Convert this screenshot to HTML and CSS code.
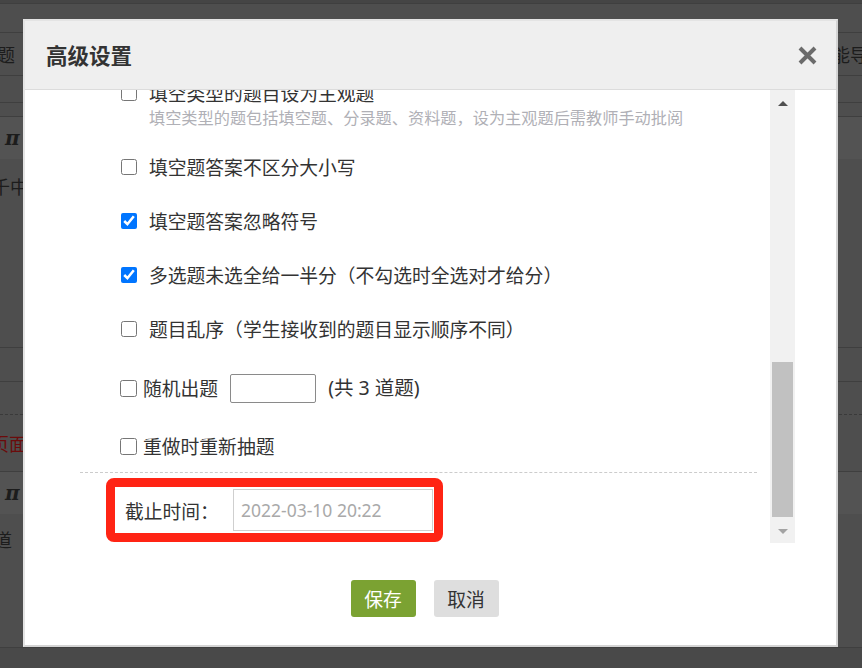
FILE: index.html
```html
<!DOCTYPE html>
<html lang="zh-CN">
<head>
<meta charset="utf-8">
<title>高级设置</title>
<link rel="stylesheet" href="styles.css">
</head>
<body>
<div class="page">
  <div class="bg-row r0"></div>
  <div class="bg-row r1"></div>
  <div class="bg-row r2"><span class="bl t-ti">题</span><span class="br">能导</span></div>
  <div class="bg-row r3"></div>
  <div class="bg-row r4"></div>
  <div class="bg-row r5"><span class="pi">π</span></div>
  <div class="bg-row r6"><span class="bl t-zh">千中</span></div>
  <div class="bg-row r7"></div>
  <div class="bg-row r8"></div>
  <div class="bg-row r9"><span class="bl t-red">页面</span></div>
  <div class="bg-row r10"><span class="pi">π</span></div>
  <div class="bg-row r11"><span class="bl t-dao">道</span></div>
  <div class="bg-row r12"></div>
</div>

<div class="modal">
  <div class="modal-head">
    <h2 class="modal-title">高级设置</h2>
    <button class="modal-close" type="button" aria-label="关闭">
      <svg width="19" height="19" viewBox="0 0 19 19"><path d="M2 2 L17 17 M17 2 L2 17" stroke="#6b6b6b" stroke-width="4" fill="none"/></svg>
    </button>
  </div>
  <div class="modal-body">
    <div class="scroll-view">
      <div class="scroll-content">
        <div class="opt-first">
          <label class="opt-label"><input type="checkbox" class="cb"><span>填空类型的题目设为主观题</span></label>
          <div class="opt-hint">填空类型的题包括填空题、分录题、资料题，设为主观题后需教师手动批阅</div>
        </div>
        <label class="opt"><input type="checkbox" class="cb"><span>填空题答案不区分大小写</span></label>
        <label class="opt"><input type="checkbox" class="cb" checked><span>填空题答案忽略符号</span></label>
        <label class="opt"><input type="checkbox" class="cb" checked><span>多选题未选全给一半分（不勾选时全选对才给分）</span></label>
        <label class="opt"><input type="checkbox" class="cb"><span>题目乱序（学生接收到的题目显示顺序不同）</span></label>
        <div class="opt opt-tight opt-random">
          <input type="checkbox" class="cb"><span>随机出题</span>
          <input type="text" class="num-input">
          <span class="count">(共 3 道题)</span>
        </div>
        <label class="opt opt-tight opt-redo"><input type="checkbox" class="cb"><span>重做时重新抽题</span></label>
        <div class="deadline-sec">
          <div class="deadline-box">
            <span class="deadline-label">截止时间：</span>
            <input type="text" class="deadline-input" placeholder="2022-03-10 20:22">
          </div>
        </div>
      </div>
    </div>
    <div class="scrollbar">
      <div class="sb-btn"><span class="arrow-up"></span></div>
      <div class="sb-track"><div class="sb-thumb"></div></div>
      <div class="sb-btn"><span class="arrow-down"></span></div>
    </div>
  </div>
  <div class="modal-foot">
    <button class="btn btn-save" type="button">保存</button>
    <button class="btn btn-cancel" type="button">取消</button>
  </div>
</div>
</body>
</html>
```

FILE: styles.css
```css
* { box-sizing: border-box; }
html, body { margin: 0; padding: 0; }
body {
  width: 862px;
  height: 668px;
  overflow: hidden;
  background: #494949;
  font-family: "Noto Sans", "Noto Sans CJK SC", sans-serif;
  position: relative;
}

/* dimmed page behind the dialog */
.page { width: 862px; }
.bg-row {
  position: relative;
  display: flex;
  justify-content: space-between;
  align-items: center;
  background: #4e4e4e;
  border-bottom: 1px solid #3f3f3f;
  overflow: hidden;
  font-family: "Noto Sans CJK SC", sans-serif;
  font-size: 18px;
  color: #1c1c1c;
}
.r0 { height: 4px; background: #454545; }
.r1 { height: 29px; }
.r2 { height: 43px; }
.r3 { height: 27px; }
.r4 { height: 14px; }
.r5 { height: 42px; background: #535353; border-bottom: none; }
.r6 { height: 189px; align-items: flex-start; }
.r7 { height: 34px; }
.r8 { height: 33px; border-bottom: 1px dashed #3a3a3a; }
.r9 { height: 57px; }
.r10 { height: 42px; background: #535353; border-bottom: none; }
.r11 { height: 134px; align-items: flex-start; }
.r12 { height: 30px; background: #494949; border-bottom: none; }
.bl { margin-left: -3px; line-height: 20px; }
.br { line-height: 20px; margin-right: -6px; }
.t-zh { margin-top: 17px; margin-left: -8px; }
.t-red { color: #6b0b0b; margin-left: -9px; }
.t-dao { margin-top: 15px; margin-left: -6px; }
.pi {
  margin-left: 5px;
  font-family: "DejaVu Serif", serif;
  font-weight: bold;
  font-style: italic;
  font-size: 20px;
  color: #1c1c1c;
}

/* dialog */
.modal {
  position: absolute;
  left: 23px;
  top: 19px;
  width: 815px;
  height: 628px;
  background: #fff;
  border: 2px solid #d4d4d4;
  border-left-color: #e4e4e4;
  border-top-color: #e4e4e4;
  display: flex;
  flex-direction: column;
  font-family: "Noto Sans", "Noto Sans CJK SC", sans-serif;
  color: #333;
}
.modal-head {
  height: 69px;
  flex: none;
  background: #efefef;
  border-bottom: 1px solid #dcdcdc;
  display: flex;
  align-items: center;
  justify-content: space-between;
  padding: 0 19px 0 21px;
}
.modal-title {
  margin: 0;
  font-size: 21.5px;
  font-weight: bold;
  color: #333;
  line-height: 28px;
  font-family: "Noto Sans CJK SC", sans-serif;
}
.modal-close {
  border: 0;
  padding: 0;
  background: none;
  width: 19px;
  height: 19px;
  display: block;
}
.modal-close svg { display: block; }

.modal-body {
  height: 453px;
  flex: none;
  display: flex;
}
.scroll-view {
  width: 745px;
  height: 453px;
  overflow: hidden;
}
.scroll-content {
  padding-left: 96px;
}
.cb {
  width: 16px;
  height: 16px;
  margin: 0;
  flex: none;
}
.opt-first { margin-top: -10px; padding-bottom: 12px; }
.opt-label {
  display: flex;
  align-items: center;
  gap: 12px;
  height: 26px;
  font-size: 18.8px;
  font-family: "Noto Sans CJK SC", sans-serif;
  line-height: 26px;
}
.opt-hint {
  padding-left: 28px;
  font-size: 16.2px;
  line-height: 22px;
  color: #b0b0b6;
  font-family: "Noto Sans CJK SC", sans-serif;
}
.opt {
  display: flex;
  align-items: center;
  gap: 12px;
  height: 54px;
  font-size: 18.8px;
  line-height: 26px;
  font-family: "Noto Sans CJK SC", sans-serif;
  color: #333;
}
.opt-tight { gap: 6px; margin-left: -1px; }
.opt-tight .cb { width: 17px; height: 17px; }
.opt-random { height: 64px; }
.opt-redo { height: 52px; }
.num-input {
  width: 86px;
  height: 29px;
  margin-left: 6px;
  border: 1px solid #8a8a8a;
  border-radius: 2px;
  padding: 0 4px;
  font-size: 16px;
}
.count {
  margin-left: 6px;
  font-size: 19.5px;
  font-family: "Noto Sans", "Noto Sans CJK SC", sans-serif;
}
.deadline-sec {
  margin-left: -41px;
  width: 677px;
  border-top: 1px dashed #cccccc;
  padding-top: 5px;
}
.deadline-box {
  margin-left: 26px;
  width: 337px;
  height: 64px;
  border: 9px solid #ff2414;
  border-radius: 8px;
  display: flex;
  align-items: center;
  padding: 0 1px 0 10px;
}
.deadline-label {
  font-size: 18.8px;
  font-family: "Noto Sans CJK SC", sans-serif;
  color: #333;
  width: 108px;
  flex: none;
}
.deadline-input {
  width: 200px;
  height: 42px;
  border: 1.5px solid #cfcfcf;
  padding: 0 7px;
  font-family: "Noto Sans", sans-serif;
  font-size: 17.5px;
  color: #333;
  outline: none;
}
.deadline-input::placeholder { color: #a9a9a9; }

.scrollbar {
  width: 25px;
  height: 453px;
  background: #f1f1f1;
  display: flex;
  flex-direction: column;
  flex: none;
}
.sb-btn {
  height: 26px;
  flex: none;
  display: flex;
  align-items: center;
  justify-content: center;
}
.arrow-up {
  width: 0; height: 0;
  border-left: 5px solid transparent;
  border-right: 5px solid transparent;
  border-bottom: 5px solid #505050;
  margin-top: 1px;
}
.arrow-down {
  width: 0; height: 0;
  border-left: 5px solid transparent;
  border-right: 5px solid transparent;
  border-top: 5px solid #a3a3a3;
  margin-top: 2px;
}
.sb-track { flex: 1; padding: 0 2px; }
.sb-thumb {
  margin-top: 246px;
  height: 155px;
  background: #c1c1c1;
}

.modal-foot {
  flex: 1;
  display: flex;
  justify-content: center;
  align-items: flex-start;
  gap: 18px;
  padding: 37px 12px 0 0;
}
.btn {
  width: 65px;
  height: 37px;
  border: 0;
  border-radius: 3px;
  font-family: "Noto Sans CJK SC", sans-serif;
  font-size: 18.8px;
  line-height: 37px;
  padding: 0;
}
.btn-save { background: #7ba232; color: #fff; }
.btn-cancel { background: #dedede; color: #333; }
```
